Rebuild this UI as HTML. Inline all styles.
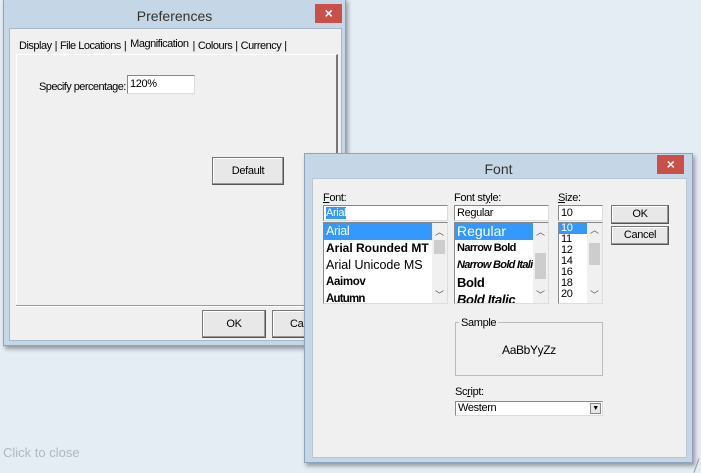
<!DOCTYPE html>
<html><head><style>
*{box-sizing:border-box;margin:0;padding:0}
body{width:701px;height:473px;background:#e4ecf4;position:relative;overflow:hidden;font-family:"Liberation Sans",sans-serif;font-size:11px;letter-spacing:-0.35px;color:#000}
.abs{position:absolute}
.win{position:absolute;background:#c5d6e6;border:1px solid #8ea4bb;box-shadow:2px 3px 4px rgba(0,0,0,.35)}
.client{position:absolute;background:#f0f0f0;border:1px solid #a9b8c8}
.title{position:absolute;left:0;right:0;text-align:center;font-size:14px;color:#333;letter-spacing:0}
.close{position:absolute;background:#c9504a;color:#fff;text-align:center;font-size:14px;font-weight:bold;line-height:19px}
.btn{position:absolute;background:#e8e8e8;border:1px solid #777;border-right-color:#555;border-bottom-color:#555;box-shadow:inset -1px -1px #999,inset 1px 1px #fff;text-align:center}
.edit{position:absolute;background:#fff;border:1px solid #888;border-right-color:#ddd;border-bottom-color:#ddd;padding-left:2px}
.list{position:absolute;background:#fff;border:1px solid #888;border-right-color:#ddd;border-bottom-color:#ddd;overflow:hidden}
.sb{position:absolute;right:0;top:0;bottom:0;width:15px;background:#f0f0f0}
.thumb{position:absolute;left:2px;width:11px;background:#cdcdcd}
.arr{position:absolute;left:3px;font-size:9px;color:#555}
.it{height:17px;line-height:17px;padding-left:2px;white-space:nowrap}
.sel{background:#3399ff;color:#fff}
</style></head><body>

<!-- Preferences -->
<div class="win" style="left:3px;top:-2px;width:343px;height:348px">
 <div class="title" style="top:9px">Preferences</div>
 <div class="close" style="left:311px;top:5px;width:27px;height:19px">×</div>
 <div class="client" style="left:5px;top:29px;width:333px;height:313px">
  <div class="abs" style="left:6px;top:9px;height:16px;line-height:16px;white-space:nowrap;letter-spacing:-0.5px">
   <span style="padding:0 3px">Display</span>|<span style="padding:0 3px">File Locations</span>|<span style="padding:0 4px;position:relative;top:-2px;background:#f0f0f0">Magnification</span>|<span style="padding:0 3px">Colours</span>|<span style="padding:0 3px">Currency</span>|
  </div>
  <div class="abs" style="left:6px;top:25px;width:322px;height:250px;border-top:1px solid #fff;border-left:1px solid #fff;border-right:2px solid #777"></div>
  <div class="abs" style="left:29px;top:52px;letter-spacing:-0.55px">Specify percentage:</div>
  <div class="edit" style="left:117px;top:46px;width:68px;height:19px;line-height:17px">120%</div>
  <div class="btn" style="left:202px;top:128px;width:72px;height:28px;line-height:26px">Default</div>
  <div class="abs" style="left:6px;top:276px;width:322px;border-top:1px solid #999;border-bottom:1px solid #fff"></div>
  <div class="btn" style="left:192px;top:281px;width:64px;height:28px;line-height:26px">OK</div>
  <div class="btn" style="left:262px;top:281px;width:64px;height:28px;line-height:26px;text-align:left;padding-left:17px">Cancel</div>
 </div>
</div>

<!-- Font -->
<div class="win" style="left:304px;top:153px;width:389px;height:310px">
 <div class="title" style="top:7px">Font</div>
 <div class="close" style="left:352px;top:1px;width:27px;height:19px">×</div>
 <div class="client" style="left:7px;top:24px;width:375px;height:280px;border-color:#b8c6d4">
  <div class="abs" style="left:10px;top:13px"><u>F</u>ont:</div>
  <div class="abs" style="left:141px;top:13px">Font st<u>y</u>le:</div>
  <div class="abs" style="left:245px;top:13px"><u>S</u>ize:</div>
  <div class="edit" style="left:10px;top:26px;width:125px;height:16px;line-height:14px"><span style="background:#3399ff;color:#fff">Arial</span></div>
  <div class="edit" style="left:141px;top:26px;width:95px;height:16px;line-height:14px">Regular</div>
  <div class="edit" style="left:245px;top:26px;width:45px;height:16px;line-height:14px">10</div>
  <div class="list" style="left:10px;top:43px;width:125px;height:82px;font-size:12.5px">
   <div class="it sel" style="width:109px">Arial</div>
   <div class="it" style="font-weight:bold;font-size:12px;letter-spacing:0">Arial Rounded MT</div>
   <div class="it" style="letter-spacing:0">Arial Unicode MS</div>
   <div class="it" style="font-weight:bold;font-size:11.5px">Aaimov</div>
   <div class="it" style="font-weight:bold;font-size:11.5px;letter-spacing:-0.8px">Autumn</div>
   <div class="sb"><div class="arr" style="top:2px">︿</div><div class="thumb" style="top:17px;height:14px"></div><div class="arr" style="bottom:2px">﹀</div></div>
  </div>
  <div class="list" style="left:141px;top:43px;width:95px;height:82px;font-size:13px">
   <div class="it sel" style="width:79px;font-size:14px;letter-spacing:0">Regular</div>
   <div class="it" style="font-weight:bold;font-size:11px;letter-spacing:-0.6px">Narrow Bold</div>
   <div class="it" style="font-weight:bold;font-style:italic;font-size:11px;letter-spacing:-0.7px">Narrow Bold Italic</div>
   <div class="it" style="font-weight:bold">Bold</div>
   <div class="it" style="font-weight:bold;font-style:italic">Bold Italic</div>
   <div class="sb"><div class="arr" style="top:2px">︿</div><div class="thumb" style="top:30px;height:26px"></div><div class="arr" style="bottom:2px">﹀</div></div>
  </div>
  <div class="list" style="left:245px;top:43px;width:45px;height:82px;font-size:11px;line-height:11px">
   <div style="background:#3399ff;color:#fff;width:28px;padding-left:2px">10</div>
   <div style="padding-left:2px">11<br>12<br>14<br>16<br>18<br>20</div>
   <div class="sb"><div class="arr" style="top:2px">︿</div><div class="thumb" style="top:20px;height:22px"></div><div class="arr" style="bottom:2px">﹀</div></div>
  </div>
  <div class="btn" style="left:298px;top:26px;width:58px;height:19px;line-height:17px">OK</div>
  <div class="btn" style="left:298px;top:47px;width:58px;height:19px;line-height:17px">Cancel</div>
  <div class="abs" style="left:142px;top:143px;width:148px;height:54px;border:1px solid #bbb"></div>
  <div class="abs" style="left:146px;top:138px;background:#f0f0f0;padding:0 2px">Sample</div>
  <div class="abs" style="left:142px;top:164px;width:148px;text-align:center;font-size:12px">AaBbYyZz</div>
  <div class="abs" style="left:142px;top:207px">Sc<u>r</u>ipt:</div>
  <div class="edit" style="left:142px;top:222px;width:148px;height:15px;line-height:13px">Western
   <div class="abs" style="right:1px;top:1px;width:11px;height:11px;background:#e6e6e6;border:1px solid #888;font-size:7px;text-align:center;line-height:10px">▼</div>
  </div>
 </div>
</div>

<div class="abs" style="left:3px;top:445px;font-size:13px;color:#b0b8c2;letter-spacing:0">Click to close</div>
<div class="abs" style="left:696px;top:458px;width:1px;height:15px;background:#8a9bb0;transform:rotate(20deg)"></div>
</body></html>
